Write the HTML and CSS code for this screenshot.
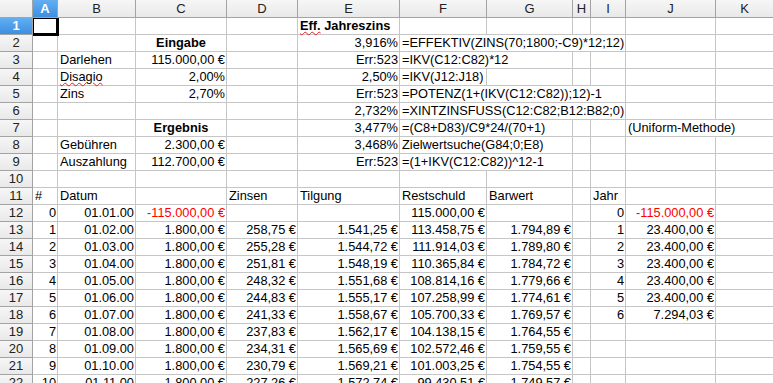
FILE: index.html
```html
<!DOCTYPE html>
<html lang="de">
<head>
<meta charset="utf-8">
<title>Effektivzins</title>
<link rel="stylesheet" href="styles.css">
</head>
<body>
<div class="sheet">
  <div class="row head">
    <div class="corner"></div>
    <div class="ch sel">A</div><div class="ch">B</div><div class="ch">C</div><div class="ch">D</div><div class="ch">E</div><div class="ch">F</div><div class="ch">G</div><div class="ch">H</div><div class="ch">I</div><div class="ch">J</div><div class="ch">K</div>
  </div>

  <div class="row">
    <div class="rh sel">1</div>
    <div class="c cursor"></div><div class="c"></div><div class="c"></div><div class="c"></div>
    <div class="c b vis"><span class="spell">Eff.</span> Jahreszins</div>
    <div class="c"></div><div class="c"></div><div class="c"></div><div class="c"></div><div class="c"></div><div class="c"></div>
  </div>

  <div class="row">
    <div class="rh">2</div>
    <div class="c"></div><div class="c"></div><div class="c b ctr">Eingabe</div><div class="c"></div>
    <div class="c r">3,916%</div>
    <div class="c s4">=EFFEKTIV(ZINS(70;1800;-C9)*12;12)</div>
    <div class="c"></div><div class="c"></div>
  </div>

  <div class="row">
    <div class="rh">3</div>
    <div class="c"></div><div class="c">Darlehen</div><div class="c r">115.000,00 €</div><div class="c"></div>
    <div class="c r">Err:523</div>
    <div class="c s2">=IKV(C12:C82)*12</div>
    <div class="c"></div><div class="c"></div><div class="c"></div><div class="c"></div>
  </div>

  <div class="row">
    <div class="rh">4</div>
    <div class="c"></div><div class="c vis"><span class="spell">Disagio</span></div><div class="c r">2,00%</div><div class="c"></div>
    <div class="c r">2,50%</div>
    <div class="c">=IKV(J12:J18)</div>
    <div class="c"></div><div class="c"></div><div class="c"></div><div class="c"></div><div class="c"></div>
  </div>

  <div class="row">
    <div class="rh">5</div>
    <div class="c"></div><div class="c">Zins</div><div class="c r">2,70%</div><div class="c"></div>
    <div class="c r">Err:523</div>
    <div class="c s4">=POTENZ(1+(IKV(C12:C82));12)-1</div>
    <div class="c"></div><div class="c"></div>
  </div>

  <div class="row">
    <div class="rh">6</div>
    <div class="c"></div><div class="c"></div><div class="c"></div><div class="c"></div>
    <div class="c r">2,732%</div>
    <div class="c s4">=XINTZINSFUSS(C12:C82;B12:B82;0)</div>
    <div class="c"></div><div class="c"></div>
  </div>

  <div class="row">
    <div class="rh">7</div>
    <div class="c"></div><div class="c"></div><div class="c b ctr">Ergebnis</div><div class="c"></div>
    <div class="c r">3,477%</div>
    <div class="c s2">=(C8+D83)/C9*24/(70+1)</div>
    <div class="c"></div><div class="c"></div>
    <div class="c s2">(Uniform-Methode)</div>
  </div>

  <div class="row">
    <div class="rh">8</div>
    <div class="c"></div><div class="c">Gebühren</div><div class="c r">2.300,00 €</div><div class="c"></div>
    <div class="c r">3,468%</div>
    <div class="c s2">Zielwertsuche(G84;0;E8)</div>
    <div class="c"></div><div class="c"></div><div class="c"></div><div class="c"></div>
  </div>

  <div class="row">
    <div class="rh">9</div>
    <div class="c"></div><div class="c">Auszahlung</div><div class="c r">112.700,00 €</div><div class="c"></div>
    <div class="c r">Err:523</div>
    <div class="c s2">=(1+IKV(C12:C82))^12-1</div>
    <div class="c"></div><div class="c"></div><div class="c"></div><div class="c"></div>
  </div>

  <div class="row">
    <div class="rh">10</div>
    <div class="c"></div><div class="c"></div><div class="c"></div><div class="c"></div><div class="c"></div><div class="c"></div><div class="c"></div><div class="c"></div><div class="c"></div><div class="c"></div><div class="c"></div>
  </div>

  <div class="row">
    <div class="rh">11</div>
    <div class="c">#</div><div class="c">Datum</div><div class="c"></div><div class="c">Zinsen</div><div class="c">Tilgung</div><div class="c">Restschuld</div><div class="c">Barwert</div><div class="c"></div><div class="c">Jahr</div><div class="c"></div><div class="c"></div>
  </div>

  <div class="row">
    <div class="rh">12</div>
    <div class="c r">0</div><div class="c r">01.01.00</div><div class="c r neg">-115.000,00 €</div><div class="c"></div><div class="c"></div><div class="c r">115.000,00 €</div><div class="c"></div><div class="c"></div><div class="c r">0</div><div class="c r neg">-115.000,00 €</div><div class="c"></div>
  </div>

  <div class="row">
    <div class="rh">13</div>
    <div class="c r">1</div><div class="c r">01.02.00</div><div class="c r">1.800,00 €</div><div class="c r">258,75 €</div><div class="c r">1.541,25 €</div><div class="c r">113.458,75 €</div><div class="c r">1.794,89 €</div><div class="c"></div><div class="c r">1</div><div class="c r">23.400,00 €</div><div class="c"></div>
  </div>

  <div class="row">
    <div class="rh">14</div>
    <div class="c r">2</div><div class="c r">01.03.00</div><div class="c r">1.800,00 €</div><div class="c r">255,28 €</div><div class="c r">1.544,72 €</div><div class="c r">111.914,03 €</div><div class="c r">1.789,80 €</div><div class="c"></div><div class="c r">2</div><div class="c r">23.400,00 €</div><div class="c"></div>
  </div>

  <div class="row">
    <div class="rh">15</div>
    <div class="c r">3</div><div class="c r">01.04.00</div><div class="c r">1.800,00 €</div><div class="c r">251,81 €</div><div class="c r">1.548,19 €</div><div class="c r">110.365,84 €</div><div class="c r">1.784,72 €</div><div class="c"></div><div class="c r">3</div><div class="c r">23.400,00 €</div><div class="c"></div>
  </div>

  <div class="row">
    <div class="rh">16</div>
    <div class="c r">4</div><div class="c r">01.05.00</div><div class="c r">1.800,00 €</div><div class="c r">248,32 €</div><div class="c r">1.551,68 €</div><div class="c r">108.814,16 €</div><div class="c r">1.779,66 €</div><div class="c"></div><div class="c r">4</div><div class="c r">23.400,00 €</div><div class="c"></div>
  </div>

  <div class="row">
    <div class="rh">17</div>
    <div class="c r">5</div><div class="c r">01.06.00</div><div class="c r">1.800,00 €</div><div class="c r">244,83 €</div><div class="c r">1.555,17 €</div><div class="c r">107.258,99 €</div><div class="c r">1.774,61 €</div><div class="c"></div><div class="c r">5</div><div class="c r">23.400,00 €</div><div class="c"></div>
  </div>

  <div class="row">
    <div class="rh">18</div>
    <div class="c r">6</div><div class="c r">01.07.00</div><div class="c r">1.800,00 €</div><div class="c r">241,33 €</div><div class="c r">1.558,67 €</div><div class="c r">105.700,33 €</div><div class="c r">1.769,57 €</div><div class="c"></div><div class="c r">6</div><div class="c r">7.294,03 €</div><div class="c"></div>
  </div>

  <div class="row">
    <div class="rh">19</div>
    <div class="c r">7</div><div class="c r">01.08.00</div><div class="c r">1.800,00 €</div><div class="c r">237,83 €</div><div class="c r">1.562,17 €</div><div class="c r">104.138,15 €</div><div class="c r">1.764,55 €</div><div class="c"></div><div class="c"></div><div class="c"></div><div class="c"></div>
  </div>

  <div class="row">
    <div class="rh">20</div>
    <div class="c r">8</div><div class="c r">01.09.00</div><div class="c r">1.800,00 €</div><div class="c r">234,31 €</div><div class="c r">1.565,69 €</div><div class="c r">102.572,46 €</div><div class="c r">1.759,55 €</div><div class="c"></div><div class="c"></div><div class="c"></div><div class="c"></div>
  </div>

  <div class="row">
    <div class="rh">21</div>
    <div class="c r">9</div><div class="c r">01.10.00</div><div class="c r">1.800,00 €</div><div class="c r">230,79 €</div><div class="c r">1.569,21 €</div><div class="c r">101.003,25 €</div><div class="c r">1.754,55 €</div><div class="c"></div><div class="c"></div><div class="c"></div><div class="c"></div>
  </div>

  <div class="row">
    <div class="rh">22</div>
    <div class="c r">10</div><div class="c r">01.11.00</div><div class="c r">1.800,00 €</div><div class="c r">227,26 €</div><div class="c r">1.572,74 €</div><div class="c r">99.430,51 €</div><div class="c r">1.749,57 €</div><div class="c"></div><div class="c"></div><div class="c"></div><div class="c"></div>
  </div>
</div>
</body>
</html>
```

FILE: styles.css
```css
html, body {
  margin: 0;
  padding: 0;
  background: #ffffff;
  overflow: hidden;
}
body {
  width: 773px;
  height: 383px;
  font-family: "Liberation Sans", Arial, sans-serif;
  font-size: 12.8px;
  color: #000;
}
.sheet {
  display: flex;
  flex-direction: column;
  width: 773px;
  height: 383px;
  overflow: hidden;
}
.row {
  display: grid;
  grid-template-columns: 33px 25px 78px 91px 71px 102px 87px 86px 18px 35px 90px 57px;
  height: 17px;
  flex: none;
}
.row.head {
  height: 18px;
}
.corner, .ch, .rh {
  box-sizing: border-box;
  background: linear-gradient(#f6f6f6, #e9e9e9);
  border-right: 1px solid #a3a3a3;
  border-bottom: 1px solid #a3a3a3;
  font-size: 13px;
  color: #222;
  text-align: center;
  line-height: 17px;
}
.row .ch:last-child {
  border-right: none;
}
.rh {
  line-height: 16px;
}
.ch.sel, .rh.sel {
  background: linear-gradient(#62aef2, #3d8fe2);
  color: #fff;
  font-weight: bold;
}
.c {
  box-sizing: border-box;
  border-right: 1px solid #c6c6c6;
  border-bottom: 1px solid #c6c6c6;
  padding: 0 2px;
  line-height: 16px;
  white-space: nowrap;
  overflow: hidden;
}
.row .c:last-child {
  border-right: none;
}
.vis { overflow: visible; }
.r { text-align: right; padding-right: 1px; }
.ctr { text-align: center; }
.b { font-weight: bold; }
.neg { color: #ff0000; }
.s2 { grid-column: span 2; }
.s4 { grid-column: span 4; }
.spell {
  text-decoration: underline wavy #e02020;
  text-decoration-thickness: 1px;
  text-underline-offset: 1px;
}
.cursor {
  position: relative;
  overflow: visible;
}
.cursor::after {
  content: "";
  position: absolute;
  left: 0;
  top: 0;
  right: -2px;
  bottom: -2px;
  border: 1px solid #000;
  border-right-width: 3px;
  border-bottom-width: 3px;
}
```
